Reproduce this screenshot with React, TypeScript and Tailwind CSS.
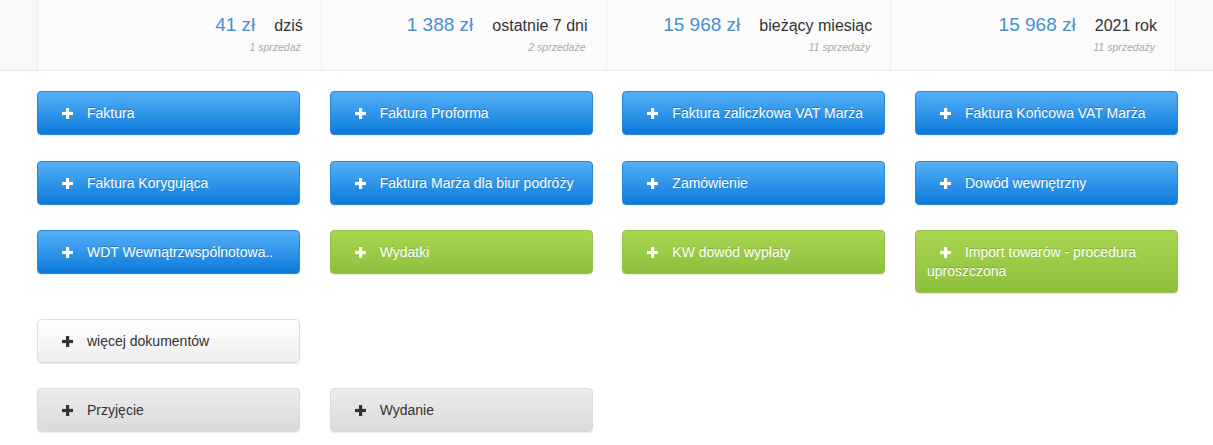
import React from "react";

type Variant = "blue" | "green" | "light" | "gray";

const stats = [
  { amount: "41 zł", label: "dziś", sub: "1 sprzedaż" },
  { amount: "1 388 zł", label: "ostatnie 7 dni", sub: "2 sprzedaże" },
  { amount: "15 968 zł", label: "bieżący miesiąc", sub: "11 sprzedaży" },
  { amount: "15 968 zł", label: "2021 rok", sub: "11 sprzedaży" },
];

const variants: Record<Variant, string> = {
  blue: "text-white border-[#2a86d6] bg-[linear-gradient(to_bottom,#55b0f8,#0b7ad9)] [text-shadow:0_-1px_0_rgba(0,0,0,0.25)]",
  green: "text-white border-[#93c246] bg-[linear-gradient(to_bottom,#a9d651,#8ebf3d)] [text-shadow:0_-1px_0_rgba(0,0,0,0.2)]",
  light: "text-[#333] border-[#dedede] bg-[linear-gradient(to_bottom,#ffffff,#eeeeee)]",
  gray: "text-[#333] border-[#dadada] bg-[linear-gradient(to_bottom,#ececec,#dadada)]",
};

function Plus() {
  return (
    <svg width="11" height="11" viewBox="0 0 11 11" className="inline-block align-[-1px]" fill="currentColor">
      <rect x="4" y="0" width="3.2" height="11" />
      <rect x="0" y="3.9" width="11" height="3.2" />
    </svg>
  );
}

function DocButton({ label, variant, className = "" }: { label: string; variant: Variant; className?: string }) {
  return (
    <button
      className={`block w-full text-left rounded-[4px] border pl-[11px] pr-3 pt-[12px] pb-[11px] text-[14px] leading-[19px] shadow-[0_1px_1px_rgba(0,0,0,0.08)] ${variants[variant]} ${className}`}
    >
      <span className="ml-[13px] mr-[14px]">
        <Plus />
      </span>
      {label}
    </button>
  );
}

export default function App() {
  return (
    <div className="w-[1213px] h-[445px] bg-white overflow-hidden font-['Liberation_Sans',Arial,sans-serif]">
      <div className="bg-[#f8f8f8] border-b border-[#e6e6e6] px-[37px]">
        <div className="grid grid-cols-4 h-[70px]">
          {stats.map((s, i) => (
            <div key={i} className="bg-[#fbfbfb] border-l border-r border-[#efefef] -ml-px first:ml-0 pr-[18px] pt-[13px] text-right">
              <div className="flex justify-end items-baseline gap-[19px]">
                <span className="text-[19px] leading-[23px] text-[#4a8fd2]">{s.amount}</span>
                <span className="text-[16px] leading-[23px] text-[#333]">{s.label}</span>
              </div>
              <div className="mt-[4px] pr-[2px] text-[10.5px] leading-[12px] italic text-[#aaa]">{s.sub}</div>
            </div>
          ))}
        </div>
      </div>

      <div className="pl-[37px] pr-[35px] pt-[20px] grid grid-cols-4 gap-x-[29.67px] gap-y-[25.5px] items-start">
        <DocButton variant="blue" label="Faktura" />
        <DocButton variant="blue" label="Faktura Proforma" />
        <DocButton variant="blue" label="Faktura zaliczkowa VAT Marża" />
        <DocButton variant="blue" label="Faktura Końcowa VAT Marża" />

        <DocButton variant="blue" label="Faktura Korygująca" />
        <DocButton variant="blue" label="Faktura Marża dla biur podróży" />
        <DocButton variant="blue" label="Zamówienie" />
        <DocButton variant="blue" label="Dowód wewnętrzny" />

        <DocButton variant="blue" label="WDT Wewnątrzwspólnotowa.." />
        <DocButton variant="green" label="Wydatki" />
        <DocButton variant="green" label="KW dowód wypłaty" />
        <DocButton variant="green" label="Import towarów - procedura uproszczona" />

        <DocButton variant="light" label="więcej dokumentów" className="col-start-1" />

        <DocButton variant="gray" label="Przyjęcie" className="col-start-1" />
        <DocButton variant="gray" label="Wydanie" />
      </div>
    </div>
  );
}
